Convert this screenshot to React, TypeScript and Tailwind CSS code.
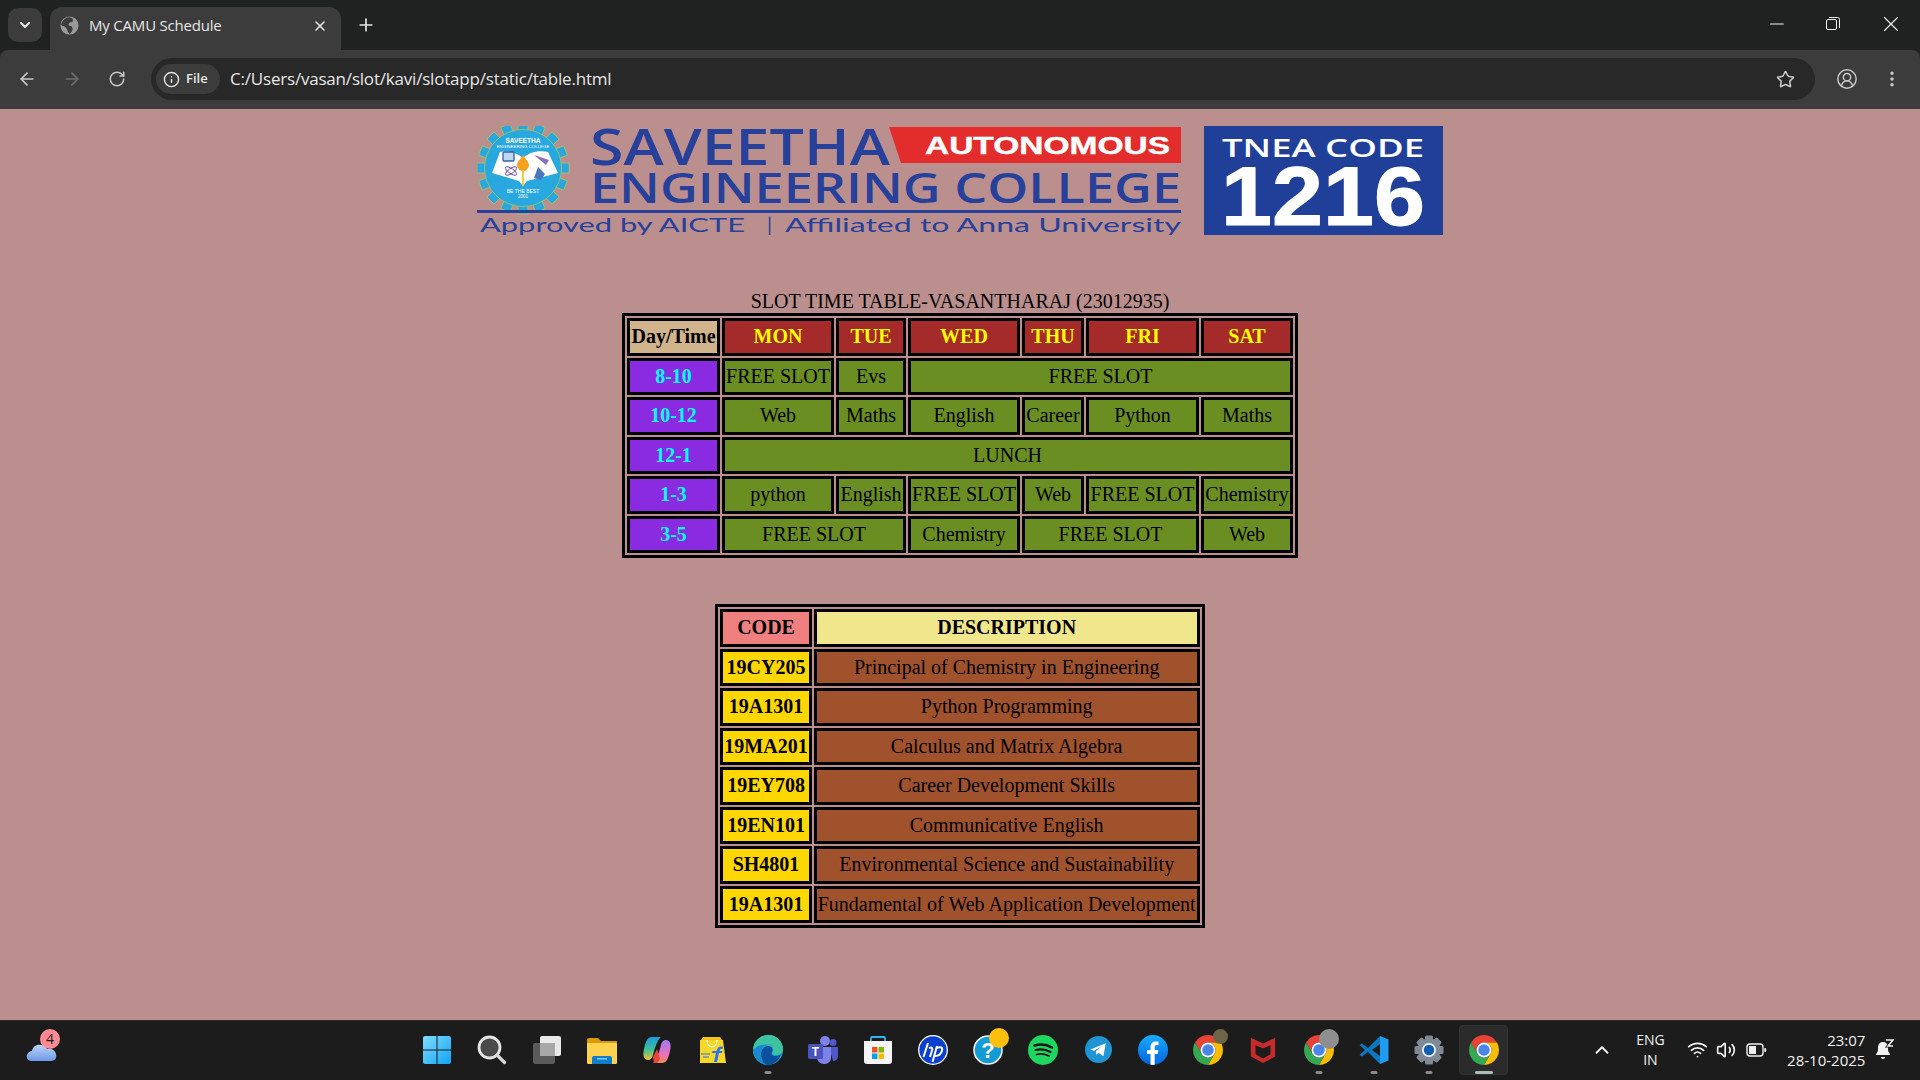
import React from "react";
import { ArrowLeft, ArrowRight, RotateCw, Info, Star, CircleUserRound, EllipsisVertical, Plus, X, ChevronDown, ChevronUp, Minus, Wifi, Volume2 } from "lucide-react";

const cell = "border-[3px] border-black p-px text-center";
const slot = `${cell} bg-[#6b8e23] font-normal`;
const day = `${cell} bg-[#a52a2a] text-[#ffff00] font-bold`;
const time = `${cell} bg-[#8a2be2] text-[#00ffff] font-bold`;

type Slot = [string, number?];
const rows: [string, Slot[]][] = [
  ["8-10", [["FREE SLOT"], ["Evs"], ["FREE SLOT", 4]]],
  ["10-12", [["Web"], ["Maths"], ["English"], ["Career"], ["Python"], ["Maths"]]],
  ["12-1", [["LUNCH", 6]]],
  ["1-3", [["python"], ["English"], ["FREE SLOT"], ["Web"], ["FREE SLOT"], ["Chemistry"]]],
  ["3-5", [["FREE SLOT", 2], ["Chemistry"], ["FREE SLOT", 2], ["Web"]]],
];
const codes = [
  ["19CY205", "Principal of Chemistry in Engineering"],
  ["19A1301", "Python Programming"],
  ["19MA201", "Calculus and Matrix Algebra"],
  ["19EY708", "Career Development Skills"],
  ["19EN101", "Communicative English"],
  ["SH4801", "Environmental Science and Sustainability"],
  ["19A1301", "Fundamental of Web Application Development"],
];

function Logo() {
  const blue = "#27409a";
  const teeth = Array.from({ length: 16 }, (_, i) => i * 22.5);
  const sans = "Liberation Sans, sans-serif";
  return (
    <svg width="966" height="110" viewBox="477 126 966 110" className="block">
      {teeth.map((a) => (
        <rect key={a} x="518" y="122" width="10" height="12" fill="#29a8e0" stroke="#a9c65a" strokeWidth="0.8" transform={`rotate(${a} 523 168)`} />
      ))}
      <circle cx="523" cy="168" r="38.500" fill="#29a8e0" stroke="#a9c65a" strokeWidth="0.8" />
      <path d="M500 152 C509 150 517 153 523 158 C529 153 537 150 548 152 L558 173 L527 181 L523 186 L519 181 L492 173 Z" fill="#fff" />
      <rect x="503" y="152" width="11" height="9" rx="1" fill="#bcd9ee" stroke="#2f5fae" strokeWidth="1.300" />
      <ellipse cx="511" cy="171" rx="6.500" ry="2.500" fill="none" stroke="#6b3fa0" strokeWidth="0.9" transform="rotate(35 511 171)" />
      <ellipse cx="511" cy="171" rx="6.500" ry="2.500" fill="none" stroke="#6b3fa0" strokeWidth="0.9" transform="rotate(-35 511 171)" />
      <path d="M534 155 L549 160 L546 165 Z" fill="#8a72b8" />
      <path d="M534 178 L538 167 L545 174 L541 180 Z" fill="#4a78c0" />
      <path d="M523 155 C526 160 529 162 529 165 A6 6 0 0 1 517 165 C517 162 520 160 523 155 Z" fill="#f4a11d" />
      <rect x="522" y="170" width="1.800" height="16" fill="#f4c430" />
      <text x="523" y="143" textAnchor="middle" fontSize="6.500" fontWeight="700" fill="#fff" fontFamily={sans}>SAVEETHA</text>
      <text x="523" y="148" textAnchor="middle" fontSize="4.400" fill="#fff" fontFamily={sans}>ENGINEERING COLLEGE</text>
      <text x="523" y="193" textAnchor="middle" fontSize="5" fill="#fff" fontFamily={sans}>BE THE BEST</text>
      <text x="523" y="198" textAnchor="middle" fontSize="4.500" fill="#fff" fontFamily={sans}>2001</text>
      <text x="590" y="165" fontSize="51" fill={blue} textLength="300" lengthAdjust="spacingAndGlyphs" fontFamily="Open Sans, sans-serif" fontWeight="600">SAVEETHA</text>
      <path d="M889 127 H1181 V163 H901 Z" fill="#e32c2c" />
      <text x="925" y="154" fontSize="24" fontWeight="700" fill="#fff" stroke="#fff" strokeWidth="0.4" textLength="245" lengthAdjust="spacingAndGlyphs" fontFamily={sans}>AUTONOMOUS</text>
      <text x="590" y="203" fontSize="42" fill={blue} textLength="591" lengthAdjust="spacingAndGlyphs" fontFamily="Open Sans, sans-serif" fontWeight="600">ENGINEERING COLLEGE</text>
      <rect x="477" y="210" width="704" height="3" fill={blue} />
      <g fill={blue} fontSize="20" fontFamily="Lato, sans-serif">
        <text x="480" y="232" textLength="265" lengthAdjust="spacingAndGlyphs">Approved by AICTE</text>
        <text x="767" y="232">|</text>
        <text x="785" y="232" textLength="396" lengthAdjust="spacingAndGlyphs">Affiliated to Anna University</text>
      </g>
      <rect x="1204" y="126" width="239" height="109" fill="#1f3f99" />
      <text x="1222" y="157" fontSize="25" fontWeight="600" fill="#fff" textLength="202" lengthAdjust="spacingAndGlyphs" fontFamily="Open Sans, sans-serif">TNEA CODE</text>
      <text x="1221" y="225" fontSize="83" fontWeight="700" fill="#fff" stroke="#fff" strokeWidth="1" textLength="204" lengthAdjust="spacingAndGlyphs" fontFamily={sans}>1216</text>
    </svg>
  );
}

function TimeTable() {
  return (
    <table className="border-separate border-spacing-[2px] border-[3px] border-black text-[20px] leading-[23px] text-black">
      <caption className="text-center font-normal h-[24px] leading-[24px]">SLOT TIME TABLE-VASANTHARAJ (23012935)</caption>
      <tbody>
        <tr className="h-[37.5px]">
          <th className={`${cell} bg-[#d2b48c] font-bold w-[93px]`}>Day/Time</th>
          {["MON", "TUE", "WED", "THU", "FRI", "SAT"].map((d, i) => (
            <th key={d} className={`${day} ${["w-[112px]", "w-[70px]", "w-[112px]", "w-[62px]", "w-[113px]", "w-[92px]"][i]}`}>{d}</th>
          ))}
        </tr>
        {rows.map(([t, cs]) => (
          <tr key={t} className="h-[37.5px]">
            <td className={time}>{t}</td>
            {cs.map(([s, span], i) => (
              <td key={i} colSpan={span} className={slot}>{s}</td>
            ))}
          </tr>
        ))}
      </tbody>
    </table>
  );
}

function CodeTable() {
  return (
    <table className="border-separate border-spacing-[2px] border-[3px] border-black text-[20px] leading-[23px] text-black mt-[46px]">
      <tbody>
        <tr className="h-[37.5px]">
          <th className={`${cell} bg-[#f08080] font-bold`}>CODE</th>
          <th className={`${cell} bg-[#f0e68c] font-bold`}>DESCRIPTION</th>
        </tr>
        {codes.map(([c, d], i) => (
          <tr key={i} className="h-[37.5px]">
            <td className={`${cell} bg-[#ffd700] font-bold`}>{c}</td>
            <td className={`${cell} bg-[#a0522d]`}>{d}</td>
          </tr>
        ))}
      </tbody>
    </table>
  );
}

function Chrome({ size = 30 }: { size?: number }) {
  return (
    <svg width={size} height={size} viewBox="2 2 44 44">
      <path d="M4.95 13A22 22 0 0 1 43.05 13H24A11 11 0 0 0 14.47 29.5Z" fill="#ea4335" />
      <path d="M43.05 13A22 22 0 0 1 24 46L33.53 29.5A11 11 0 0 0 24 13Z" fill="#fbbc04" />
      <path d="M24 46A22 22 0 0 1 4.95 13L14.47 29.5A11 11 0 0 0 33.53 29.5Z" fill="#34a853" />
      <circle cx="24" cy="24" r="11" fill="#fff" />
      <circle cx="24" cy="24" r="8.500" fill="#4a86e8" />
    </svg>
  );
}

const s30 = { width: 30, height: 30, viewBox: "0 0 30 30" };

const Win = () => (
  <svg {...s30}>
    <defs>
      <linearGradient id="w1" x1="0" y1="0" x2="1" y2="1"><stop offset="0" stopColor="#7fdcff" /><stop offset="1" stopColor="#12a4f5" /></linearGradient>
    </defs>
    <path d="M1 3a2 2 0 0 1 2-2H14.500V14.500H1Z M15.500 1H27a2 2 0 0 1 2 2V14.500H15.500Z M1 15.500H14.500V29H3a2 2 0 0 1-2-2Z M15.500 15.500H29V27a2 2 0 0 1-2 2H15.500Z" fill="url(#w1)" />
  </svg>
);
const Search = () => (
  <svg {...s30}>
    <circle cx="12.500" cy="12.500" r="10.500" fill="#4a4a4a" stroke="#e4e4e4" strokeWidth="2.800" />
    <path d="M20.500 20.500L27.500 27.500" stroke="#d8d8d8" strokeWidth="3.200" strokeLinecap="round" />
  </svg>
);
const TaskView = () => (
  <svg {...s30}>
    <rect x="1" y="8" width="22" height="21" rx="2" fill="#5b5b5b" />
    <rect x="8" y="1" width="21" height="20" rx="2" fill="#e9e9e9" />
    <rect x="8" y="8" width="15" height="13" fill="#a8a8a8" />
  </svg>
);
const Folder = () => (
  <svg {...s30}>
    <path d="M0 5a2 2 0 0 1 2-2h9l3 3h15a1 1 0 0 1 1 1v3H0Z" fill="#d99a08" />
    <path d="M0 8H29a1 1 0 0 1 1 1V28a1 1 0 0 1-1 1H1a1 1 0 0 1-1-1Z" fill="#fdd24e" />
    <path d="M5 29v-6a2 2 0 0 1 2-2h16a2 2 0 0 1 2 2v6Z" fill="#0f7fc9" />
    <rect x="10" y="23" width="10" height="1.600" fill="#7fc4ee" />
  </svg>
);
const Copilot = () => (
  <svg {...s30}>
    <defs>
      <linearGradient id="c1" x1="0" y1="0" x2="0" y2="1"><stop offset="0" stopColor="#1c9be0" /><stop offset=".55" stopColor="#3fbf9a" /><stop offset="1" stopColor="#f2c230" /></linearGradient>
      <linearGradient id="c2" x1="0" y1="0" x2="0" y2="1"><stop offset="0" stopColor="#9a7df0" /><stop offset=".6" stopColor="#ea6fc0" /><stop offset="1" stopColor="#f58a50" /></linearGradient>
    </defs>
    <path d="M10 2H19C16 4 13 12 11 20 10 24 8 25 6 25 2 25 1 21 1.500 17 3 8 5 2 10 2Z" fill="url(#c1)" />
    <path d="M20 28H11C14 26 17 18 19 10 20 6 22 5 24 5 28 5 29 9 28.500 13 27 22 25 28 20 28Z" fill="url(#c2)" />
    <path d="M12 28L11 22 15 14 18 24 15 28Z" fill="#e8453c" />
  </svg>
);
const Flipkart = () => (
  <svg {...s30}>
    <path d="M5 2H22L24 5H3Z" fill="#f4c21b" />
    <path d="M2 5H25L28 28H2Z" fill="#f6d72a" />
    <path d="M9 5C9 14 19 14 19 5" fill="none" stroke="#fff" strokeWidth="1.100" />
    <path d="M16 27L18 18H14L14.500 16H18.500C19.500 12 21 11 25 11.500L24.500 14C22.500 13.700 22 14 21.500 16H24.500L24 18H21L19 27Z" fill="#2874f0" />
    <path d="M3 19H12M5 22H11" stroke="#2874f0" strokeWidth="1.100" />
  </svg>
);
const Edge = () => (
  <svg {...s30}>
    <defs>
      <linearGradient id="e1" x1="0" y1="0" x2="1" y2="1"><stop offset="0" stopColor="#36d29a" /><stop offset="1" stopColor="#1a8fd8" /></linearGradient>
    </defs>
    <circle cx="15" cy="15" r="15" fill="url(#e1)" />
    <path d="M0 15C1 5 9 0 16 0 24 0 30 7 30 14 30 19 26 20 22 20 19 20 19 18 20 16 22 11 17 8 12 9 6 10 2 15 0 19Z" fill="#3ec3a0" />
    <path d="M8 19C8 13 13 10 17 11.500 20 13 20 15 19 17 18 19 19 21 22 21 25 21 27 20 28 19 26 26 20 30 15 30 10 30 8 24 8 19Z" fill="#0b4f9e" />
    <path d="M0 15C1 22 6 29 13 30 9 27 7 22 8 17 9 13 12 10 15 10 9 9 3 11 0 15Z" fill="#1788d2" />
  </svg>
);
const Teams = () => (
  <svg {...s30}>
    <circle cx="17" cy="6" r="5" fill="#7b83eb" />
    <circle cx="25" cy="7.500" r="3.500" fill="#5059c9" />
    <path d="M21 12H29a1 1 0 0 1 1 1V21C30 25 27 26 25 26Z" fill="#5059c9" />
    <path d="M9 12H23V23C23 27 19 29 16 29 12 29 9 26 9 22Z" fill="#7b83eb" />
    <rect x="0" y="9" width="15" height="15" rx="1.500" fill="#4b53bc" />
    <text x="7.500" y="21" textAnchor="middle" fontSize="12" fontWeight="700" fill="#fff" fontFamily="Liberation Sans, sans-serif">T</text>
  </svg>
);
const Store = () => (
  <svg {...s30}>
    <path d="M8 7V3a1 1 0 0 1 1-1H21a1 1 0 0 1 1 1V7" fill="none" stroke="#2fb6ea" strokeWidth="1.800" />
    <path d="M1 6H29V26a3 3 0 0 1-3 3H4a3 3 0 0 1-3-3Z" fill="#f4f4f4" />
    <rect x="9" y="12" width="5.500" height="5.500" fill="#f25022" />
    <rect x="15.500" y="12" width="5.500" height="5.500" fill="#7fba00" />
    <rect x="9" y="18.500" width="5.500" height="5.500" fill="#00a4ef" />
    <rect x="15.500" y="18.500" width="5.500" height="5.500" fill="#ffb900" />
  </svg>
);
const Hp = () => (
  <svg {...s30}>
    <circle cx="15" cy="15" r="14.300" fill="#0a3fd0" stroke="#fff" strokeWidth="1.300" />
    <path d="M10 8L5.500 22M11 13C14 12 15 13 14 15.500L12 22M19 11L14.500 27M18.500 13C22 11.500 25 12 24 15.500 23 19.500 20 21 17 21" fill="none" stroke="#fff" strokeWidth="2" />
  </svg>
);
const Help = () => (
  <span className="relative block">
    <svg {...s30}>
      <circle cx="15" cy="15" r="14" fill="#139bd6" stroke="#f2f2f2" strokeWidth="1.600" />
      <text x="15" y="23" textAnchor="middle" fontSize="22" fontWeight="700" fill="#fff" fontFamily="Liberation Sans, sans-serif">?</text>
    </svg>
    <span className="absolute -top-[7px] left-[16px] w-[20px] h-[20px] rounded-full bg-[#fdc00f]" />
  </span>
);
const Spotify = () => (
  <svg {...s30}>
    <circle cx="15" cy="15" r="15" fill="#1ed760" />
    <path d="M6.500 10.500C12 9 19 9.500 24 12.500" stroke="#141414" strokeWidth="2.600" fill="none" strokeLinecap="round" />
    <path d="M7.500 15C12 14 18 14.500 22.500 17" stroke="#141414" strokeWidth="2.200" fill="none" strokeLinecap="round" />
    <path d="M8.500 19.500C12.500 18.500 17 19 21 21" stroke="#141414" strokeWidth="1.800" fill="none" strokeLinecap="round" />
  </svg>
);
const Telegram = () => (
  <svg width="27" height="27" viewBox="0 0 30 30">
    <circle cx="15" cy="15" r="15" fill="#1f96d3" />
    <path d="M6 15L23 8 20.500 22.500 15 18.500 12.500 21 12 17 19 11 10 16.500Z" fill="#fff" />
  </svg>
);
const Facebook = () => (
  <svg {...s30}>
    <defs>
      <linearGradient id="f1" x1="0" y1="0" x2="0" y2="1"><stop offset="0" stopColor="#18acfe" /><stop offset="1" stopColor="#0163e0" /></linearGradient>
      <clipPath id="f2"><circle cx="15" cy="15" r="15" /></clipPath>
    </defs>
    <circle cx="15" cy="15" r="15" fill="url(#f1)" />
    <path clipPath="url(#f2)" d="M12.500 30V19H9V15H12.500V12C12.500 8.500 14.500 6.500 17.800 6.500 19.300 6.500 20.500 6.700 20.500 6.700V10H18.800C17.200 10 16.700 11 16.700 12V15H20.300L19.700 19H16.700V30Z" fill="#fff" />
  </svg>
);
const McAfee = () => (
  <svg width="28" height="30" viewBox="0 0 30 30">
    <path d="M2 2L15 8 28 2V22L15 29 2 22ZM7 10V19.500L15 24 23 19.500V10L15 13.500Z" fill="#c62a2a" fillRule="evenodd" />
  </svg>
);
const VsCode = () => (
  <svg {...s30}>
    <path d="M21 1L29.500 4.500V25.500L21 29Z" fill="#1f9cf0" />
    <path d="M21 1L9 13 3 8.500 0.500 10 6 15 0.500 20 3 21.500 9 17 21 29V21L13 15 21 9Z" fill="#0a78c2" />
  </svg>
);
const Gear = () => {
  const t = Array.from({ length: 8 }, (_, i) => i * 45);
  return (
    <svg {...s30}>
      {t.map((a) => <rect key={a} x="11" y="0.500" width="8" height="7" rx="1.500" fill="#7f8a94" transform={`rotate(${a} 15 15)`} />)}
      <circle cx="15" cy="15" r="11.500" fill="#7f8a94" />
      <circle cx="15" cy="15" r="7" fill="#eaf2f8" />
      <circle cx="15" cy="15" r="5.200" fill="#0f5fae" />
    </svg>
  );
};

function Avatar({ size, color }: { size: number; color: string }) {
  return <span className="absolute rounded-full block -top-[6px] -right-[5px]" style={{ width: size, height: size, background: color }} />;
}

const items: { node: React.ReactNode; dot?: boolean; active?: boolean }[] = [
  { node: <Win /> },
  { node: <Search /> },
  { node: <TaskView /> },
  { node: <Folder /> },
  { node: <Copilot /> },
  { node: <Flipkart /> },
  { node: <Edge />, dot: true },
  { node: <Teams /> },
  { node: <Store /> },
  { node: <Hp /> },
  { node: <Help /> },
  { node: <Spotify /> },
  { node: <Telegram /> },
  { node: <Facebook /> },
  { node: <span className="relative block"><Chrome /><Avatar size={15} color="#6d6548" /></span> },
  { node: <McAfee /> },
  { node: <span className="relative block"><Chrome /><Avatar size={20} color="#8f8f8f" /></span>, dot: true },
  { node: <VsCode />, dot: true },
  { node: <Gear />, dot: true },
  { node: <Chrome />, active: true },
];

function Taskbar() {
  return (
    <footer className="h-[60px] shrink-0 bg-[#1c1c1c] border-t border-[#2d2d2d] flex text-[#f0f0f0] font-['Open_Sans',sans-serif]">
      <div className="w-[409.5px] pl-[26px] flex items-center shrink-0">
        <span className="relative block mt-[3px]">
          <svg width="32" height="22" viewBox="0 0 32 22" className="block">
            <defs><linearGradient id="cl" x1="0" y1="0" x2="0" y2="1"><stop offset="0" stopColor="#bcd4f7" /><stop offset="1" stopColor="#6f9ae8" /></linearGradient></defs>
            <path d="M6 20C2 20 0 17 1 14 2 11 4 10 6 10 7 5 11 3 15 4 18 4 20 6 21 8 25 7 29 9 30 13 31 17 29 20 25 20Z" fill="url(#cl)" />
          </svg>
          <span className="absolute -top-[12px] left-[14px] w-[20px] h-[20px] rounded-full bg-[#ff8a94] text-[#1c1c1c] text-[14px] leading-[20px] text-center">4</span>
        </span>
      </div>
      <div className="flex shrink-0">
        {items.map((it, i) => (
          <div key={i} className="relative w-[55.1px] flex items-center justify-center pb-[2px]">
            {it.active && <span className="absolute left-[3px] right-[3px] top-[4px] bottom-[5px] rounded-[4px] bg-[#2b2b2b] border border-[#333]" />}
            <span className="relative block">{it.node}</span>
            {it.dot && <span className="absolute bottom-[6px] left-1/2 -translate-x-1/2 w-[7px] h-[3px] rounded-full bg-[#8a8a8a]" />}
            {it.active && <span className="absolute bottom-[6px] left-1/2 -translate-x-1/2 w-[18px] h-[3px] rounded-full bg-[#a9bcbc]" />}
          </div>
        ))}
      </div>
      <div className="flex-1 flex items-center pb-[2px]">
        <ChevronUp size={22} strokeWidth={2} className="ml-[80px] text-[#f0f0f0]" />
        <div className="ml-[15px] w-[44px] text-center text-[14px] leading-[20px]">ENG<br />IN</div>
        <Wifi size={21} className="ml-[15px]" />
        <Volume2 size={20} className="ml-[8px]" />
        <svg width="21" height="14" viewBox="0 0 21 14" className="ml-[10px]">
          <rect x="1" y="1" width="16" height="12" rx="3" fill="none" stroke="#f0f0f0" strokeWidth="1.400" />
          <rect x="3" y="3" width="7" height="8" fill="#f0f0f0" />
          <rect x="18.200" y="5" width="2" height="4" rx="1" fill="#f0f0f0" />
        </svg>
        <div className="ml-[12px] w-[86px] text-right text-[15px] leading-[20px]">23:07<br />28-10-2025</div>
        <svg width="20" height="22" viewBox="0 0 20 22" className="ml-[9px]">
          <path d="M2 15C4 13 4 11 4 9 4 5 6 3 9 3 12 3 14 5 14 9 14 11 14 13 16 15V16H2Z" fill="#f0f0f0" />
          <path d="M7 18H11A2 2 0 0 1 7 18Z" fill="#f0f0f0" />
          <path d="M12 1H19L14 7H19" fill="none" stroke="#1c1c1c" strokeWidth="3" />
          <path d="M12 1H19L14 7H19" fill="none" stroke="#f0f0f0" strokeWidth="1.500" />
        </svg>
      </div>
    </footer>
  );
}

function BrowserChrome() {
  return (
    <header className="shrink-0 bg-[#202221] font-['Open_Sans',sans-serif]">
      <div className="h-[50px] flex items-end relative">
        <div className="ml-[8px] mb-[8px] w-[34px] h-[34px] rounded-[10px] bg-[#3c3c3c] flex items-center justify-center">
          <ChevronDown size={16} strokeWidth={3} className="text-[#e6e6e6]" />
        </div>
        <div className="ml-[8px] w-[291px] h-[43px] rounded-t-[12px] bg-[#3c3c3c] flex items-center pl-[10px] pr-[13px] pb-[6px]">
          <svg width="19" height="19" viewBox="0 0 20 20" className="shrink-0">
            <circle cx="10" cy="10" r="9.500" fill="#9a9a9a" />
            <path d="M10 1C13 2 15 4 13 6 11 7 9 7 9 9 9 11 12 10 13 12 14 15 12 17 10 19 8 17 8 14 6 12 4 10 2 11 1 9 2 5 5 2 10 1Z" fill="#3c3c3c" />
          </svg>
          <span className="ml-[10px] text-[15px] text-[#e6e6e6] tracking-[-0.2px] whitespace-nowrap">My CAMU Schedule</span>
          <X size={16} strokeWidth={2.500} className="ml-auto text-[#e6e6e6]" />
        </div>
        <Plus size={20} strokeWidth={2} className="ml-[15px] mb-[15px] text-[#e6e6e6]" />
        <div className="ml-auto flex items-center h-[50px] pb-[2px] text-[#f0f0f0]">
          <Minus size={22} strokeWidth={1.200} className="mr-[38px]" />
          <svg width="14" height="14" viewBox="0 0 14 14" className="mr-[38px]" fill="none" stroke="#f0f0f0" strokeWidth="1">
            <rect x="0.500" y="2.500" width="10" height="10" rx="1.500" />
            <path d="M3 0.500H11.500A2 2 0 0 1 13.500 2.500V11" />
          </svg>
          <X size={26} strokeWidth={1} className="mr-[16px]" />
        </div>
      </div>
      <div className="h-[59px] bg-[#3c3c3c] flex items-center rounded-t-[8px] pb-[1px]">
        <ArrowLeft size={20} strokeWidth={2} className="ml-[17px] text-[#c8c8c8]" />
        <ArrowRight size={20} strokeWidth={2} className="ml-[25px] text-[#6f6f6f]" />
        <RotateCw size={18} strokeWidth={2} className="ml-[26px] text-[#c8c8c8]" />
        <div className="ml-[25px] w-[1664px] h-[42px] rounded-full bg-[#282828] flex items-center pl-[5px] pr-[20px]">
          <div className="h-[30px] w-[64px] rounded-full bg-[#3c3c3c] flex items-center pl-[7px] gap-[6px]">
            <Info size={17} className="text-[#e6e6e6]" />
            <span className="text-[13px] font-semibold text-[#e6e6e6]">File</span>
          </div>
          <span className="ml-[10px] text-[17px] text-[#e6e6e6] tracking-[-0.2px] whitespace-nowrap">C:/Users/vasan/slot/kavi/slotapp/static/table.html</span>
          <Star size={19} strokeWidth={2} className="ml-auto text-[#c8c8c8]" />
        </div>
        <CircleUserRound size={22} strokeWidth={1.600} className="ml-[21px] text-[#c8c8c8]" />
        <EllipsisVertical size={20} strokeWidth={2.200} className="ml-[24px] text-[#c8c8c8]" />
      </div>
    </header>
  );
}

export default function App() {
  return (
    <div className="h-screen w-full flex flex-col overflow-hidden">
      <BrowserChrome />
      <main className="flex-1 min-h-0 bg-[#bc8f8f] flex flex-col items-center font-['Liberation_Serif',serif] pt-[17px]">
        <div className="mb-[53px]"><Logo /></div>
        <TimeTable />
        <CodeTable />
      </main>
      <Taskbar />
    </div>
  );
}
